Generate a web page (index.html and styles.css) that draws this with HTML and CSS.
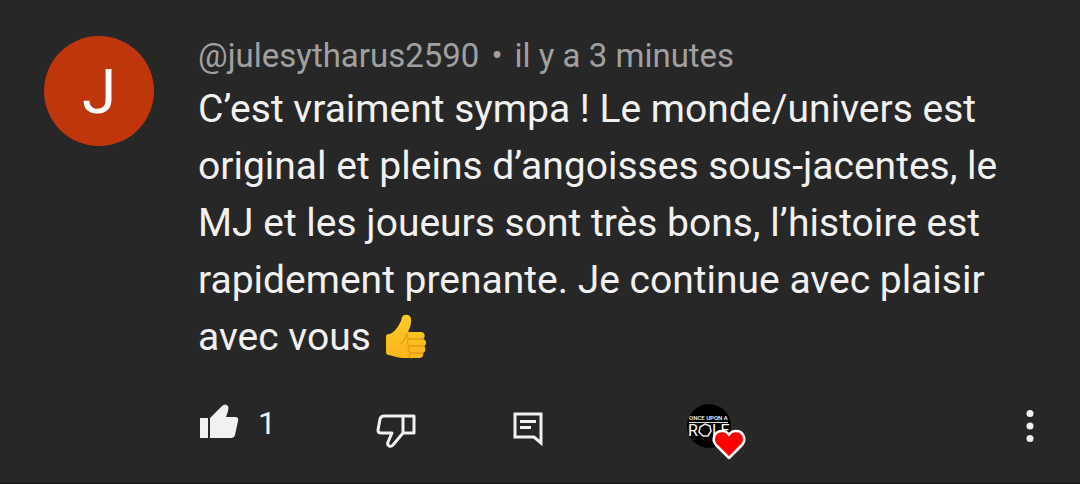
FILE: index.html
```html
<!DOCTYPE html>
<html lang="fr">
<head>
<meta charset="utf-8">
<meta name="viewport" content="width=device-width, initial-scale=1">
<title>Commentaire</title>
<link rel="stylesheet" href="styles.css">
</head>
<body>
<article class="comment">
  <div class="avatar">J</div>
  <div class="content">
    <header class="meta"><span>@julesytharus2590</span><span>•</span><span>il y a 3 minutes</span></header>
    <p class="text">C’est vraiment sympa ! Le monde/univers est original et pleins d’angoisses sous-jacentes, le MJ et les joueurs sont très bons, l’histoire est rapidement prenante. Je continue avec plaisir avec vous <svg class="emoji" viewBox="0 0 42 46" role="img" aria-label="Pouce levé">
      <defs>
        <linearGradient id="skin" x1="0" y1="0" x2="0" y2="1">
          <stop offset="0" stop-color="#ffca28"/>
          <stop offset="1" stop-color="#fbb51c"/>
        </linearGradient>
      </defs>
      <path fill="url(#skin)" d="M1 23C1 21 2 20 4 20C9 19 13 13 16 7C17 4 17 1 20 1C24 0 27 3 26 8C26 12 24 15 23 18H36C40 18 41 23 38 25C42 26 42 31 39 32C41 34 41 38 38 39C39 42 37 44 34 44H19C13 44 9 42 4 41C2 41 1 40 1 38Z"/>
      <path fill="none" stroke="#e59b12" stroke-width="1.3" stroke-linecap="round" d="M24 18C21 20 21 23 24 25H38M24 25C21 27 22 31 25 32H39M25 32C22 34 23 38 26 39H38M26 39C23 40 24 43 26 44M21 21C21 25 18 28 15 30"/>
    </svg></p>
    <div class="actions">
      <button class="action like" type="button" aria-label="J’aime, 1">
        <svg width="42" height="56" viewBox="0 0 42 56" fill="#f1f1f1">
          <path d="M2 15H10V35H2ZM12 15L24 3Q27 0 30 3Q31 5 30 8L28 14H37Q41 14 40 18L37 32Q36 35 33 35H12Z"/>
        </svg>
        <span class="count">1</span>
      </button>
      <button class="action dislike" type="button" aria-label="Je n’aime pas">
        <svg width="42" height="56" viewBox="0 0 42 56" fill="none" stroke="#f1f1f1" stroke-width="3" stroke-linejoin="round">
          <path d="M27 13H8Q5 13 4 16L2 27Q2 30 5 30H16L12 39Q11 42 13 43Q15 44 17 42L27 30ZM27 13H38V30H27"/>
        </svg>
      </button>
      <button class="action reply" type="button" aria-label="Répondre">
        <svg width="34" height="56" viewBox="0 0 34 56" fill="none" stroke="#f1f1f1" stroke-width="3">
          <path d="M3 11H29V40L22 34H3Z"/>
          <path d="M8 18.500H24M8 24.500H19"/>
        </svg>
      </button>
      <div class="hearted" role="img" aria-label="Once Upon a Role aime ce commentaire">
        <svg width="62" height="60" viewBox="0 0 62 60">
          <circle cx="23" cy="23" r="22" fill="#000"/>
          <text class="logo-small" x="3" y="17">ONCE UPON A</text>
          <path stroke="#ddd" d="M3 19.500H42"/>
          <text class="logo-big" x="2" y="33">R</text>
          <path fill="none" stroke="#eee" stroke-width="1.500" d="M19 21L24 23L25 28L22 33L17 33L13 29L14 24Z"/>
          <text class="logo-big" x="26" y="33">LE</text>
          <path fill="#f00" stroke="#fff" stroke-width="2.500" stroke-linejoin="round" d="M43 55L30 42C25 36 29 28 36 28C39 28 42 30 43 32C44 30 47 28 50 28C57 28 61 36 56 42Z"/>
        </svg>
      </div>
      <button class="action more" type="button" aria-label="Plus d’options">
        <svg width="10" height="56" viewBox="0 0 10 56" fill="#f1f1f1">
          <circle cx="5" cy="10.500" r="3.500"/><circle cx="5" cy="23" r="3.500"/><circle cx="5" cy="35.500" r="3.500"/>
        </svg>
      </button>
    </div>
  </div>
</article>
</body>
</html>
```
FILE: styles.css
```css
* {
  box-sizing: border-box;
}

body {
  margin: 0;
  background: #272727;
  color: #f1f1f1;
  font-family: Roboto, "Liberation Sans", sans-serif;
}

.comment {
  display: flex;
  gap: 44px;
  padding: 36px 45px 20px 44px;
  border-bottom: 1px solid #111;
}

.avatar {
  display: flex;
  flex: none;
  align-items: center;
  justify-content: center;
  width: 110px;
  height: 110px;
  border-radius: 50%;
  background: #bf360c;
  color: #fff;
  font-size: 62px;
}

.content {
  flex: 1;
  min-width: 0;
}

.meta {
  display: flex;
  gap: 12px;
  margin-bottom: 5px;
  color: #a0a0a0;
  font-size: 33px;
  line-height: 40px;
}

.text {
  margin: 0 0 37px;
  font-size: 39px;
  line-height: 57px;
}

.emoji {
  width: 42px;
  height: 46px;
  margin: -10px 4px;
  vertical-align: 0;
}

.actions {
  display: flex;
  align-items: flex-start;
}

.action {
  display: flex;
  padding: 0;
  border: 0;
  background: none;
  color: inherit;
  font: inherit;
  cursor: pointer;
}

.like {
  gap: 18px;
  width: 178px;
}

.count {
  font-size: 32px;
  line-height: 40px;
}

.dislike {
  width: 136px;
}

.reply {
  width: 174px;
}

.hearted svg {
  display: block;
}

.more {
  margin-left: auto;
}

.logo-small,
.logo-big {
  fill: #fff;
}

.logo-small {
  font-size: 6px;
  font-weight: 500;
}

.logo-big {
  font-size: 16px;
}
```
